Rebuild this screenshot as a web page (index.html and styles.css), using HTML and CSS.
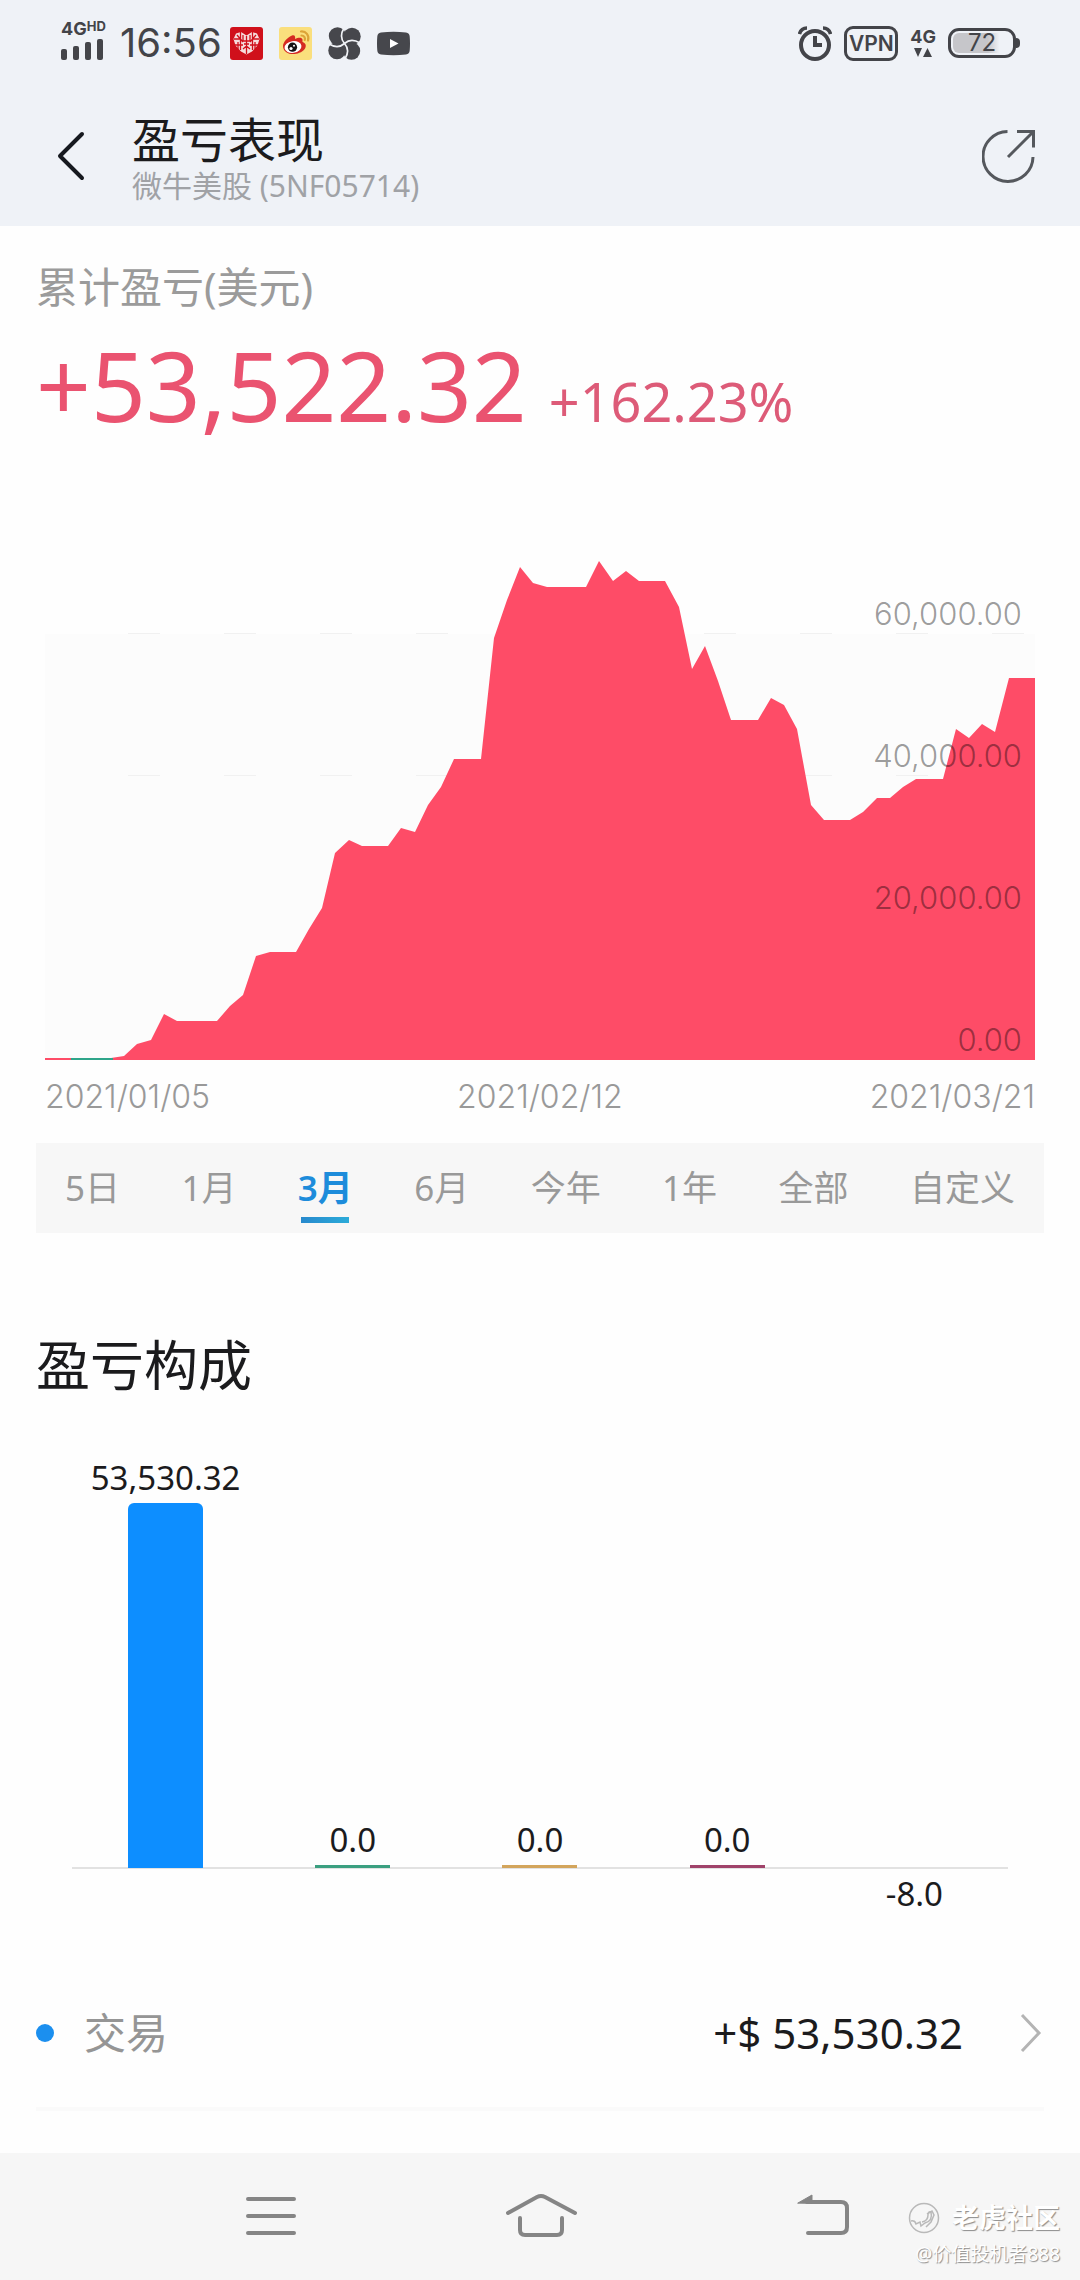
FILE: index.html
```html
<!DOCTYPE html>
<html lang="zh-CN">
<head>
<meta charset="utf-8">
<meta name="viewport" content="width=device-width, initial-scale=1">
<title>盈亏表现</title>
<link rel="stylesheet" href="styles.css">
</head>
<body>
<div class="screen">
  <header class="top">
    <div class="status">
      <div class="status-left">
        <div class="signal">
          <span class="net">4G<small>HD</small></span>
          <svg width="44" height="21" viewBox="0 0 44 21" fill="#44454a" aria-hidden="true">
            <rect x="0" y="10" width="6" height="11" rx="2"/><rect x="12" y="7" width="6" height="14" rx="2"/><rect x="24" y="3" width="6" height="18" rx="2"/><rect x="36" y="0" width="6" height="21" rx="2"/>
          </svg>
        </div>
        <time class="clock">16:56</time>
        <div class="apps">
          <svg width="33" height="33" viewBox="0 0 33 33" aria-hidden="true">
            <rect width="33" height="33" rx="3" fill="#d0101b"/>
            <path d="M16.500 27.500 11 24.500 5.500 18.500 3.500 12 6 6.500 11 5 16.500 8.500 22 5 27 6.500 29.500 12 27.500 18.500 22 24.500Z" fill="#f6dcdc"/>
            <path d="M10.500 5v18M22.500 5v18M4 12h7M22 12h7M5 18h8M20 18h8M7 8l6 7M26 8l-6 7M13 22l3.500-3 3.500 3M13 8v6h7V8M14 17h5M16.500 9v18M8 15v7M25 15v7" stroke="#d0101b" stroke-width="1.300" fill="none"/>
          </svg>
          <svg width="33" height="33" viewBox="0 0 33 33" aria-hidden="true">
            <rect width="33" height="33" rx="3" fill="#fadf7d"/>
            <path d="M4 19c0-4 5-9 9-10.500 3-1 3.500 1.500 3 3.500 3-1.500 7-2 7.500.500.300 1.200-.500 2 .200 2.500 4 1.500 3.500 5 2 7-3 4-9 5.500-13.500 5C7 26.500 4 23 4 19Z" fill="#d52a22"/>
            <ellipse cx="14" cy="20" rx="8.500" ry="5.800" fill="#fff" transform="rotate(-8 14 20)"/>
            <circle cx="13.500" cy="20.200" r="4.600" fill="#161214"/><circle cx="12" cy="21.500" r="1.600" fill="#fff"/><circle cx="15" cy="18.800" r="1" fill="#fff"/>
            <path d="M22 4.500c5-.500 8.500 4 7 9M22.500 8.500c2.500 0 4 2 3.300 4.500" stroke="#dca437" stroke-width="2.200" fill="none" stroke-linecap="round"/>
          </svg>
          <svg width="33" height="33" viewBox="0 0 33 33" aria-hidden="true">
            <g fill="#46474c"><circle cx="9.500" cy="9" r="8.700"/><circle cx="24" cy="9.500" r="8.700"/><circle cx="23.500" cy="24" r="8.700"/><circle cx="9" cy="23.500" r="8.700"/><rect x="12" y="12" width="9" height="9"/></g>
            <path d="M16.500 16.500C12.500 12 13 6 16 1M16.500 16.500C21 12.500 27 13 32 16M16.500 16.500C20.500 21 20 27 17 32M16.500 16.500C12 20.500 6 20 1 17" stroke="#f0f2f6" stroke-width="1.700" fill="none"/>
          </svg>
          <svg width="33" height="33" viewBox="0 0 33 33" aria-hidden="true">
            <path d="M4 5.500Q16.500 4 29 5.500q3.500.500 3.700 4 .600 7 0 14-.200 3.500-3.700 4-12.500 1.500-25 0-3.500-.500-3.700-4-.600-7 0-14 .200-3.500 3.700-4Z" fill="#46474c"/>
            <path d="m13 12 8.500 4.500L13 21Z" fill="#fff"/>
          </svg>
        </div>
      </div>
      <div class="status-right">
        <svg width="34" height="35" viewBox="0 0 34 35" fill="none" stroke="#434449" aria-hidden="true">
          <circle cx="17" cy="19" r="14" stroke-width="4"/>
          <path d="M17 10v9h7" stroke-width="4"/>
          <path d="M1.500 8C2.500 4 5 2 9 2M32.500 8C31.500 4 29 2 25 2" stroke-width="3.500"/>
        </svg>
        <span class="vpn">VPN</span>
        <div class="data">
          <span class="net">4G</span>
          <svg width="18" height="10" viewBox="0 0 18 10" fill="#434449" aria-hidden="true"><path d="M0 0h8L4 9ZM9 9h9L13.500 0Z"/></svg>
        </div>
        <div class="battery"><span class="cell">72</span><i class="tip"></i></div>
      </div>
    </div>
    <div class="appbar">
      <button class="icon-btn" type="button" aria-label="返回">
        <svg width="30" height="50" viewBox="0 0 30 50" fill="none" stroke="#16191f" stroke-width="4" stroke-linecap="round" stroke-linejoin="round"><path d="M26 3 4 25l22 22"/></svg>
      </button>
      <div class="heading">
        <h1>盈亏表现</h1>
        <p>微牛美股 (5NF05714)</p>
      </div>
      <button class="icon-btn" type="button" aria-label="分享">
        <svg width="54" height="54" viewBox="0 0 54 54" fill="none" stroke="#55585d" stroke-width="3"><path d="M25.500 2.500A25 25 0 1 0 51 28M35 2.500h16.500v16M51 3 26 28"/></svg>
      </button>
    </div>
  </header>

  <main>
    <section class="summary">
      <h2 class="label">累计盈亏(美元)</h2>
      <p class="figures"><strong>+53,522.32</strong><span>+162.23%</span></p>
    </section>

    <figure class="trend">
      <div class="plot">
        <svg class="area" viewBox="0 0 990 500" preserveAspectRatio="none" aria-hidden="true">
          <rect x="0" y="74" width="990" height="426" fill="#fcfcfc"/>
          <path d="M83 73.500H990M83 215.500H990" stroke="#f1f1f1" stroke-dasharray="32 64"/>
          <path fill="#fe4c67" d="M0 500V498H66L79 496 92 484 106 480 119 454 132 461H172L185 446 198 435 211 396 225 392H251L264 369 277 348 290 293 304 280 317 286H343L356 268 370 272 383 245 396 227 409 199H436L449 78 462 40 475 7 488 23 502 27H541L554 1 568 21 581 11 594 21H620L634 47 647 109 660 86 673 121 686 160H713L726 138 739 145 752 169 766 245 779 260H805L818 252 832 238H845L858 227 871 219H898L911 169 924 178 937 164 950 172 964 118H990V500Z"/>
          <path d="M26 499H68" stroke="#2fa58a" stroke-width="2"/>
        </svg>
        <ul class="scale">
          <li>60,000.00</li><li>40,000.00</li><li>20,000.00</li><li>0.00</li>
        </ul>
      </div>
      <figcaption class="dates"><time>2021/01/05</time><time>2021/02/12</time><time>2021/03/21</time></figcaption>
    </figure>

    <nav class="ranges" aria-label="时间范围">
      <button type="button">5日</button>
      <button type="button">1月</button>
      <button type="button" class="active" aria-current="true">3月</button>
      <button type="button">6月</button>
      <button type="button">今年</button>
      <button type="button">1年</button>
      <button type="button">全部</button>
      <button type="button">自定义</button>
    </nav>

    <section class="breakdown">
      <h2 class="title">盈亏构成</h2>
      <ul class="bars">
        <li><div class="column"><span>53,530.32</span><i class="bar blue" style="height:365px"></i></div></li>
        <li><div class="column"><span>0.0</span><i class="bar green" style="height:3px"></i></div></li>
        <li><div class="column"><span>0.0</span><i class="bar orange" style="height:3px"></i></div></li>
        <li><div class="column"><span>0.0</span><i class="bar purple" style="height:3px"></i></div></li>
        <li><div class="column"></div><span class="below">-8.0</span></li>
      </ul>
      <a class="item" href="#trades">
        <i class="dot"></i>
        <span class="name">交易</span>
        <span class="amount">+$ 53,530.32</span>
        <svg width="22" height="40" viewBox="0 0 22 40" fill="none" stroke="#b4b4b4" stroke-width="3"><path d="m2 2 17 18L2 38"/></svg>
      </a>
    </section>
  </main>

  <footer class="system">
    <button type="button" aria-label="菜单">
      <svg width="100" height="50" viewBox="0 0 100 50"><path d="M28 7h46M28 24h46M28 41h46"/></svg>
    </button>
    <button type="button" aria-label="主页">
      <svg width="100" height="50" viewBox="0 0 100 50"><path d="M18 21 47 5q4-2 8 0l30 16M30 26v12q0 5 5 5h32q5 0 5-5V26"/></svg>
    </button>
    <button type="button" aria-label="后退">
      <svg width="100" height="50" viewBox="0 0 100 50"><path d="M47 10h34q6 0 6 6v19q0 6-6 6H48"/><path class="solid" d="M38 11 52 3v8Z"/></svg>
    </button>
    <div class="watermark">
      <p class="brand">
        <svg width="32" height="32" viewBox="0 0 32 32" fill="none" stroke="#b9b9b9" stroke-width="1.500" aria-hidden="true"><circle cx="16" cy="16" r="14.500"/><path d="M3 19q4-1 5 3l4-2 1 4 4-3q8-2 6-11-3-1-3 3 0 6-6 7M19 12l5-3 2 4-3 7-5 5"/></svg>
        <span>老虎社区</span>
      </p>
      <p class="user">@价值投机者888</p>
    </div>
  </footer>
</div>
</body>
</html>
```
FILE: styles.css
```css
* { box-sizing: border-box; margin: 0; padding: 0; }

body {
  background: #fefefe;
  color: #1b1b1d;
  font-family: "Noto Sans", "Noto Sans CJK SC", sans-serif;
}

svg { display: block; flex: none; }
ul { list-style: none; }
button { border: 0; background: none; font: inherit; color: inherit; }

.screen { display: flex; flex-direction: column; min-height: 100vh; }

/* header */
.top { background: #eff2f7; }

.status,
.status-left,
.status-right,
.apps { display: flex; align-items: center; }

.status {
  justify-content: space-between;
  height: 86px;
  padding: 0 60px;
  color: #434449;
  font-family: Inter, sans-serif;
}

.signal,
.data { display: flex; flex-direction: column; }
.signal { gap: 1px; width: 46px; padding: 0 0 6px 1px; }
.data { align-items: center; gap: 2px; }

.net { display: flex; font-size: 18px; line-height: 18px; font-weight: 700; white-space: nowrap; }
.net small { font-size: 13px; line-height: 13px; }

.clock { margin: 0 8px 0 14px; font-size: 40px; line-height: 48px; }
.apps { gap: 16px; }

.status-right { gap: 12px; }
.vpn {
  width: 54px;
  border: 3px solid #434449;
  border-radius: 9px;
  font-size: 21px;
  line-height: 29px;
  font-weight: 600;
  text-align: center;
}
.battery { display: flex; align-items: center; }
.cell {
  width: 68px;
  border: 3px solid #434449;
  border-radius: 11px;
  padding: 2px;
  background: linear-gradient(90deg, #c6c6ca 60%, #eff2f7 80%) content-box;
  font-size: 24px;
  line-height: 20px;
  text-align: center;
}
.tip { width: 4px; height: 10px; border-radius: 0 4px 4px 0; background: #434449; }

.appbar {
  display: flex;
  align-items: center;
  height: 140px;
  padding: 0 44px 0 56px;
}
.icon-btn { flex: none; }
.heading { flex: 1; padding: 4px 0 0 46px; }
.heading h1 { font-size: 48px; line-height: 56px; font-weight: 400; }
.heading p { font-size: 30px; line-height: 36px; color: #a0a2a6; }

/* total profit */
.summary { padding: 33px 36px 0; }
.label { font-size: 42px; line-height: 56px; font-weight: 400; color: #9b9b9b; }
.figures {
  display: flex;
  align-items: baseline;
  gap: 22px;
  margin-top: 14px;
  line-height: 112px;
  color: #ea5370;
}
.figures strong { font-size: 96px; font-weight: 400; }
.figures span { font-size: 54px; color: #dd5b78; }

/* trend chart */
.trend {
  margin: 103px 45px 0;
  font-family: Inter, sans-serif;
  font-size: 32px;
  font-weight: 300;
  line-height: 40px;
}
.plot { position: relative; }
.area { width: 100%; height: 500px; }
.scale {
  position: absolute;
  inset: 0 13px 0 auto;
  display: flex;
  flex-direction: column;
  justify-content: flex-end;
  gap: 102px;
  font-size: 31px;
  text-align: right;
  color: rgba(0, 0, 0, 0.4);
}
.dates { display: flex; justify-content: space-between; margin-top: 17px; color: #999; }

/* range picker */
.ranges {
  display: flex;
  justify-content: space-between;
  margin: 26px 36px 0;
  padding: 0 29px;
  background: #f7f7f7;
  color: #999;
}
.ranges button { height: 90px; font-size: 35px; line-height: 52px; white-space: nowrap; }
.ranges .active { position: relative; font-weight: 600; color: #1d8cdb; }
.ranges .active::after {
  content: "";
  position: absolute;
  bottom: 10px;
  left: 50%;
  width: 48px;
  height: 6px;
  margin-left: -24px;
  background: linear-gradient(90deg, #2789cd, #2cabd9);
}

/* breakdown */
.breakdown { padding: 100px 36px 0; }
.title { font-size: 54px; line-height: 64px; font-weight: 400; }

.bars {
  display: grid;
  grid-template-columns: repeat(5, 1fr);
  height: 470px;
  margin: 56px 36px 0;
  font-size: 33px;
  line-height: 50px;
  text-align: center;
}
.column {
  display: flex;
  flex-direction: column;
  align-items: center;
  justify-content: flex-end;
  height: 416px;
  border-bottom: 2px solid #e2e2e2;
}
.bar { flex: none; width: 75px; margin-bottom: -1px; }
.blue { border-radius: 6px 6px 0 0; background: #0d8eff; }
.green { background: #3b9f80; }
.orange { background: #d3a55c; }
.purple { background: #a0436a; }
.below { display: block; }

.item {
  display: flex;
  align-items: center;
  height: 152px;
  margin-top: 36px;
  padding-right: 2px;
  border-bottom: 4px solid #fafafa;
  color: inherit;
  text-decoration: none;
}
.dot { width: 18px; height: 18px; border-radius: 50%; background: #1b8fef; }
.name { flex: 1; padding-left: 30px; font-size: 42px; line-height: 56px; color: #959595; }
.amount { padding-right: 57px; font-size: 42px; line-height: 56px; }

/* system navigation */
.system {
  position: relative;
  display: grid;
  grid-template-columns: repeat(3, 25%);
  justify-content: center;
  height: 127px;
  margin-top: auto;
  background: #f6f6f6;
}
.system button { display: flex; align-items: center; justify-content: center; }
.system button svg { fill: none; stroke: #858585; stroke-width: 4; stroke-linecap: round; }
.system .solid { fill: #858585; stroke-width: 1; }

.watermark {
  position: absolute;
  right: 20px;
  bottom: 10px;
  color: #fff;
  text-align: right;
  text-shadow: 1px 1px 1px #8c8c8c;
}
.brand { display: flex; align-items: center; justify-content: flex-end; gap: 12px; font-size: 27px; line-height: 40px; font-weight: 600; }
.user { font-size: 19px; line-height: 32px; }
```
